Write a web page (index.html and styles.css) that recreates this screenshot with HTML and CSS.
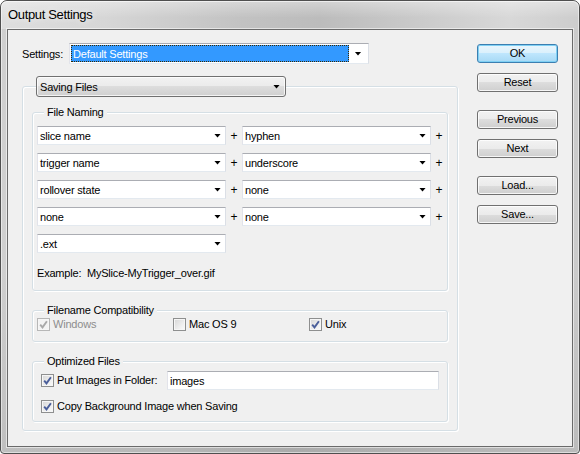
FILE: index.html
```html
<!DOCTYPE html>
<html>
<head>
<meta charset="utf-8">
<title>Output Settings</title>
<link rel="stylesheet" href="styles.css">
</head>
<body>
<div class="window">
  <div class="titlebar"><span class="title">Output Settings</span></div>
  <div class="client">
    <div class="main">
      <div class="settings-row">
        <span class="settings-label">Settings:</span>
        <div class="combo settings-combo">
          <span class="sel"><span class="sel-text">Default Settings</span></span>
          <span class="arrow-box"><span class="arrow"></span></span>
        </div>
      </div>
      <fieldset class="panel">
        <legend class="panel-legend"><div class="dd-button"><span>Saving Files</span><span class="arrow"></span></div></legend>
        <div class="panel-body">
          <fieldset class="group">
            <legend>File Naming</legend>
            <div class="naming-body">
              <div class="naming-grid">
                <div class="combo"><span>slice name</span><span class="arrow"></span></div>
                <span class="plus">+</span>
                <div class="combo"><span>hyphen</span><span class="arrow"></span></div>
                <span class="plus">+</span>

                <div class="combo"><span>trigger name</span><span class="arrow"></span></div>
                <span class="plus">+</span>
                <div class="combo"><span>underscore</span><span class="arrow"></span></div>
                <span class="plus">+</span>

                <div class="combo"><span>rollover state</span><span class="arrow"></span></div>
                <span class="plus">+</span>
                <div class="combo"><span>none</span><span class="arrow"></span></div>
                <span class="plus">+</span>

                <div class="combo"><span>none</span><span class="arrow"></span></div>
                <span class="plus">+</span>
                <div class="combo"><span>none</span><span class="arrow"></span></div>
                <span class="plus">+</span>

                <div class="combo"><span>.ext</span><span class="arrow"></span></div>
              </div>
              <div class="example">Example:&nbsp; MySlice-MyTrigger_over.gif</div>
            </div>
          </fieldset>

          <fieldset class="group compat">
            <legend>Filename Compatibility</legend>
            <div class="compat-body">
              <label class="check disabled">
                <span class="cb"><svg viewBox="0 0 11 11" width="11" height="11"><path d="M2.2 5.6 L4.5 8.4 L8.9 2.2" fill="none" stroke-width="1.9"/></svg></span>
                <span>Windows</span>
              </label>
              <label class="check">
                <span class="cb"></span>
                <span>Mac OS 9</span>
              </label>
              <label class="check">
                <span class="cb"><svg viewBox="0 0 11 11" width="11" height="11"><path d="M2.2 5.6 L4.5 8.4 L8.9 2.2" fill="none" stroke-width="1.9"/></svg></span>
                <span>Unix</span>
              </label>
            </div>
          </fieldset>

          <fieldset class="group optimized">
            <legend>Optimized Files</legend>
            <div class="opt-body">
              <div class="opt-row">
                <label class="check">
                  <span class="cb"><svg viewBox="0 0 11 11" width="11" height="11"><path d="M2.2 5.6 L4.5 8.4 L8.9 2.2" fill="none" stroke-width="1.9"/></svg></span>
                  <span>Put Images in Folder:</span>
                </label>
                <div class="textbox">images</div>
              </div>
              <div class="opt-row second">
                <label class="check">
                  <span class="cb"><svg viewBox="0 0 11 11" width="11" height="11"><path d="M2.2 5.6 L4.5 8.4 L8.9 2.2" fill="none" stroke-width="1.9"/></svg></span>
                  <span>Copy Background Image when Saving</span>
                </label>
              </div>
            </div>
          </fieldset>
        </div>
      </fieldset>
    </div>

    <div class="buttons">
      <div class="btn-pair">
        <div class="btn default">OK</div>
        <div class="btn">Reset</div>
      </div>
      <div class="btn-pair">
        <div class="btn">Previous</div>
        <div class="btn">Next</div>
      </div>
      <div class="btn-pair">
        <div class="btn">Load...</div>
        <div class="btn">Save...</div>
      </div>
    </div>
  </div>
</div>
</body>
</html>
```

FILE: styles.css
```css
* { box-sizing: border-box; }

html, body {
  margin: 0;
  padding: 0;
}

body {
  width: 580px;
  height: 454px;
  overflow: hidden;
  background: #ffffff;
  font-family: "Liberation Sans", Arial, sans-serif;
  font-size: 11px;
  letter-spacing: -0.2px;
  color: #000;
}

.window {
  width: 580px;
  height: 454px;
  border: 1px solid #4f4f4f;
  border-radius: 7px 7px 4px 4px;
  background:
    linear-gradient(180deg, rgba(255,255,255,0) 60%, rgba(0,0,0,0.08) 100%),
    linear-gradient(90deg, #cfcfcf 0%, #c6c6c6 30%, #b9b9b9 50%, #c3c3c3 75%, #cbcbcb 100%);
  padding: 0 6px 6px 6px;
  display: flex;
  flex-direction: column;
  box-shadow: inset 0 0 0 1px rgba(255,255,255,0.5);
  overflow: hidden;
}

.titlebar {
  height: 28px;
  margin: 0 -6px;
  padding: 0 0 1px 7px;
  display: flex;
  align-items: center;
  border-radius: 6px 6px 0 0;
  background:
    linear-gradient(180deg, rgba(255,255,255,0.35) 0%, rgba(255,255,255,0) 60%),
    linear-gradient(90deg, #dedede 0%, #d6d6d6 18%, #c2c2c2 42%, #bcbcbc 55%, #cacaca 72%, #d8d8d8 88%, #cdcdcd 100%);
  box-shadow: inset 0 1px 0 rgba(255,255,255,0.6), inset 1px 0 0 rgba(255,255,255,0.5), inset -1px 0 0 rgba(255,255,255,0.5);
}

.title {
  font-size: 13px;
  letter-spacing: -0.35px;
  color: #000;
  text-shadow: 0 0 6px rgba(255,255,255,0.9);
}

.client {
  flex: 1;
  border: 1px solid #6a6a6a;
  background: #f0f0f0;
  display: flex;
  gap: 19px;
  padding-left: 14px;
  box-shadow: 0 0 0 1px rgba(255,255,255,0.55);
}

.main {
  width: 436px;
  padding-top: 13px;
}

/* settings row */
.settings-row {
  display: flex;
  align-items: center;
  height: 21px;
}

.settings-label {
  width: 47px;
}

.combo {
  height: 19px;
  background: #fff;
  border: 1px solid;
  border-color: #abadb3 #dbdfe6 #e3e9ef #e2e3ea;
  display: flex;
  align-items: center;
  padding-left: 2px;
  white-space: nowrap;
}

.combo .arrow {
  margin-left: auto;
  margin-right: 4px;
}

.arrow {
  display: block;
  width: 7px;
  height: 4px;
  background: #000;
  clip-path: polygon(0 0, 100% 0, 50% 100%);
  flex: none;
}

.settings-combo {
  width: 300px;
  height: 21px;
  padding: 1px 0 1px 1px;
  align-items: stretch;
}

.sel {
  flex: 1;
  background: #3399ff;
  padding: 0;
  display: flex;
}

.sel-text {
  flex: 1;
  border: 1px dotted #3a2a00;
  color: #fff;
  padding-left: 1px;
  display: flex;
  align-items: center;
}

.arrow-box {
  width: 19px;
  display: flex;
  align-items: center;
  justify-content: center;
}

.arrow-box .arrow {
  margin: 0 1px 0 0;
}

/* panel fieldset */
fieldset {
  margin: 0;
  padding: 0;
  min-width: 0;
}

.panel {
  margin-top: 12px;
  width: 436px;
  border: 1px solid #d5dfe5;
  border-radius: 3px;
  box-shadow: 1px 1px 0 #fff, inset 1px 1px 0 #fff;
}

.panel-legend {
  padding: 0;
  margin-left: 13px;
}

.dd-button {
  width: 250px;
  height: 21px;
  border: 1px solid #707070;
  border-radius: 3px;
  background: linear-gradient(180deg, #f2f2f2 0%, #ebebeb 50%, #dddddd 50%, #cfcfcf 100%);
  box-shadow: inset 0 0 0 1px rgba(255,255,255,0.75);
  display: flex;
  align-items: center;
  padding-left: 3px;
}

.dd-button .arrow {
  margin-left: auto;
  margin-right: 5px;
}

.panel-body {
  padding: 0 9px 8px 9px;
}

.group {
  margin-top: 9px;
  border: 1px solid #d5dfe5;
  border-radius: 3px;
  box-shadow: 1px 1px 0 #fff, inset 1px 1px 0 #fff;
}

.group + .group {
  margin-top: 13px;
}

.group legend {
  margin-left: 11px;
  padding: 0 3px;
  line-height: 13px;
  background: #f0f0f0;
}

/* file naming */
.naming-body {
  padding: 7px 0 10px 4px;
}

.naming-grid {
  display: grid;
  grid-template-columns: 189px 16px 189px 16px;
  grid-auto-rows: 19px;
  row-gap: 8px;
}

.plus {
  display: flex;
  align-items: center;
  justify-content: center;
  font-size: 12px;
}

.example {
  margin-top: 14px;
  line-height: 13px;
}

/* checkboxes */
.check {
  display: flex;
  align-items: center;
  gap: 3px;
  line-height: 13px;
  white-space: nowrap;
}

.cb {
  width: 13px;
  height: 13px;
  flex: none;
  border: 1px solid #8e8f8f;
  background: linear-gradient(135deg, #d6d6d6 0%, #eeeeee 60%, #fbfbfb 100%);
  box-shadow: inset 0 0 0 1px #f6f6f6;
  display: flex;
  align-items: center;
  justify-content: center;
}

.cb svg {
  display: block;
  stroke: #4a5e9a;
}

.check.disabled {
  color: #8d8d8d;
}

.check.disabled .cb {
  border-color: #b7b7b7;
  background: #f3f3f3;
}

.check.disabled .cb svg {
  stroke: #a9a9a9;
}

.compat-body {
  display: grid;
  grid-template-columns: 136px 136px 136px;
  padding: 1px 0 10px 4px;
}

/* optimized files */
.opt-body {
  padding: 3px 8px 8px 8px;
}

.opt-row {
  display: flex;
  align-items: center;
  height: 19px;
}

.opt-row.second {
  margin-top: 10px;
  height: 13px;
}

.textbox {
  margin-left: auto;
  width: 272px;
  height: 19px;
  background: #fff;
  border: 1px solid;
  border-color: #abadb3 #dbdfe6 #e3e9ef #e2e3ea;
  padding-left: 2px;
  display: flex;
  align-items: center;
}

/* buttons */
.buttons {
  width: 81px;
  padding-top: 14px;
  display: flex;
  flex-direction: column;
  gap: 18px;
}

.btn-pair {
  display: flex;
  flex-direction: column;
  gap: 10px;
}

.btn {
  height: 19px;
  border: 1px solid #707070;
  border-radius: 3px;
  background: linear-gradient(180deg, #f2f2f2 0%, #ebebeb 50%, #dddddd 50%, #cfcfcf 100%);
  box-shadow: inset 0 0 0 1px rgba(255,255,255,0.8);
  display: flex;
  align-items: center;
  justify-content: center;
  padding-bottom: 1px;
}

.btn.default {
  border-color: #3c7fb1;
  background: linear-gradient(180deg, #eaf6fd 0%, #d9f0fc 50%, #bee6fd 50%, #a7d9f5 100%);
  box-shadow: inset 0 0 0 1px #7fd0f4;
}
```
